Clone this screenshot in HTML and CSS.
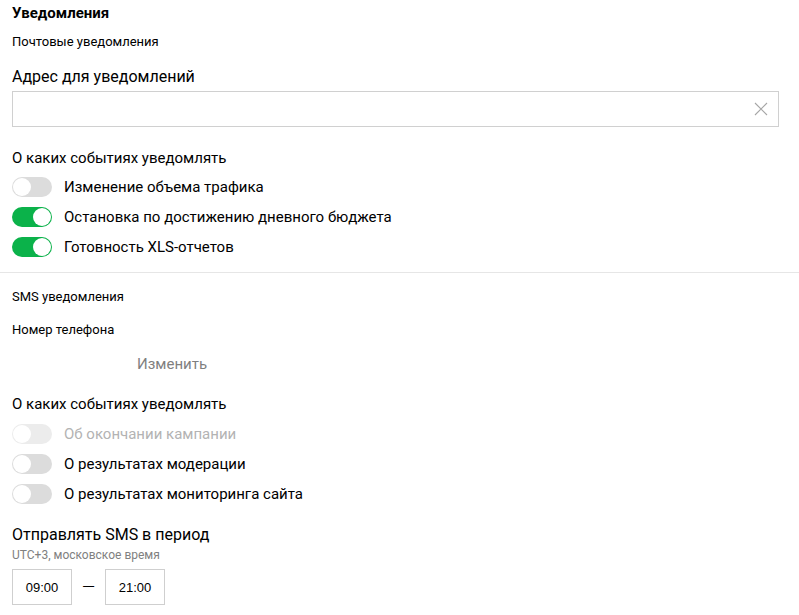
FILE: index.html
```html
<!DOCTYPE html>
<html lang="ru">
<head>
<meta charset="utf-8">
<title>Уведомления</title>
<link rel="stylesheet" href="styles.css">
</head>
<body>
<div class="page">
  <section class="block">
    <h1 class="title">Уведомления</h1>
    <div class="subtitle sub-mail">Почтовые уведомления</div>
    <div class="label label-addr">Адрес для уведомлений</div>
    <div class="input">
      <span class="input-value"></span>
      <svg class="clear" width="14" height="14" viewBox="0 0 14 14"><path d="M1 1L13 13M13 1L1 13" stroke="#a6a6a6" stroke-width="1.1" fill="none"/></svg>
    </div>
    <div class="label label-events">О каких событиях уведомлять</div>
    <ul class="toggles toggles-mail">
      <li class="row"><span class="toggle"></span><span class="row-text">Изменение объема трафика</span></li>
      <li class="row"><span class="toggle on"></span><span class="row-text">Остановка по достижению дневного бюджета</span></li>
      <li class="row"><span class="toggle on"></span><span class="row-text">Готовность XLS-отчетов</span></li>
    </ul>
  </section>
  <hr class="sep">
  <section class="block">
    <div class="subtitle sub-sms">SMS уведомления</div>
    <div class="subtitle sub-phone">Номер телефона</div>
    <div class="phone-row"><span class="phone"></span><span class="change">Изменить</span></div>
    <div class="label label-events2">О каких событиях уведомлять</div>
    <ul class="toggles toggles-sms">
      <li class="row disabled"><span class="toggle"></span><span class="row-text">Об окончании кампании</span></li>
      <li class="row"><span class="toggle"></span><span class="row-text">О результатах модерации</span></li>
      <li class="row"><span class="toggle"></span><span class="row-text">О результатах мониторинга сайта</span></li>
    </ul>
    <div class="label label-period">Отправлять SMS в период</div>
    <div class="hint">UTC+3, московское время</div>
    <div class="period">
      <span class="time">09:00</span>
      <span class="dash">—</span>
      <span class="time">21:00</span>
    </div>
  </section>
</div>
</body>
</html>
```
FILE: styles.css
```css
* { box-sizing: border-box; }
html, body { margin: 0; padding: 0; background: #fff; }
body {
  font-family: Roboto, "Liberation Sans", Arial, sans-serif;
  color: #000;
  width: 799px;
  height: 615px;
  overflow: hidden;
}
.page { padding-top: 3px; }
.block { padding: 0 12px; }
.title {
  margin: 0;
  font-size: 15px;
  font-weight: 700;
  line-height: 20px;
}
.subtitle {
  font-size: 13px;
  line-height: 18px;
}
.sub-mail { margin-top: 10px; }
.label {
  font-size: 15px;
  line-height: 20px;
  color: #000;
}
.label-addr { margin-top: 16px; font-size: 16px; }
.input {
  margin-top: 4px;
  width: 767px;
  height: 36px;
  border: 1px solid #d0d0d0;
  display: flex;
  align-items: center;
  justify-content: space-between;
  padding: 0 10px 0 12px;
}
.clear { display: block; }
.label-events { margin-top: 21px; }
.toggles {
  list-style: none;
  margin: 4px 0 0;
  padding: 0;
}
.row {
  height: 30px;
  display: flex;
  align-items: center;
  gap: 12px;
  font-size: 15px;
  color: #000;
}
.toggle {
  position: relative;
  width: 40px;
  height: 20px;
  border-radius: 10px;
  background: #dcdcdc;
  flex: none;
}
.toggle::after {
  content: "";
  position: absolute;
  left: 1px;
  top: 1px;
  width: 18px;
  height: 18px;
  border-radius: 50%;
  background: #fff;
}
.toggle.on { background: #0bb24a; }
.toggle.on::after { left: 21px; }
.row.disabled { color: #b3b3b3; }
.row.disabled .toggle { background: #ececec; }
.sep {
  margin: 10px 0 0;
  border: 0;
  border-top: 1px solid #e6e6e6;
  height: 0;
}
.sub-sms { margin-top: 15px; }
.sub-phone { margin-top: 15px; }
.phone-row {
  margin-top: 15px;
  height: 20px;
  display: flex;
  align-items: center;
}
.phone { width: 125px; }
.change {
  font-size: 15px;
  line-height: 20px;
  color: #7f7f7f;
}
.label-events2 { margin-top: 20px; }
.toggles-sms { margin-top: 5px; }
.label-period { margin-top: 16px; font-size: 16px; }
.hint {
  margin-top: 2px;
  font-size: 12px;
  line-height: 16px;
  color: #808080;
}
.period {
  margin-top: 6px;
  display: flex;
  align-items: center;
}
.time {
  width: 60px;
  height: 36px;
  border: 1px solid #cfcfcf;
  display: flex;
  align-items: center;
  justify-content: center;
  font-family: "Liberation Sans", Arial, sans-serif;
  font-size: 13px;
}
.dash {
  width: 33px;
  text-align: center;
  font-size: 17px;
  font-weight: 300;
}
```
